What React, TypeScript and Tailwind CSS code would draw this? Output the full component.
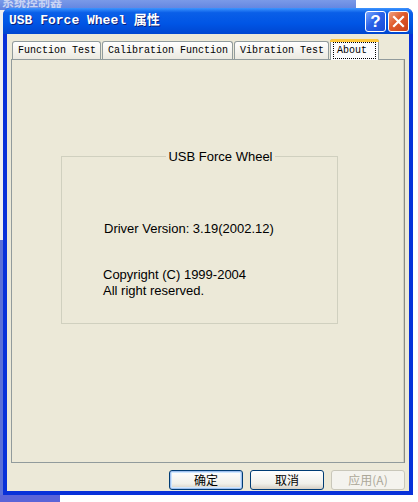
const tabs = ['Function Test', 'Calibration Function', 'Vibration Test'];

function TitleButton({ kind }: { kind: 'help' | 'close' }) {
  const close = kind === 'close';
  return (
    <div
      className={`flex h-[21px] w-[21px] items-center justify-center rounded-[3px] border border-white ${
        close ? 'bg-[linear-gradient(135deg,#f0a080,#e05a2a_45%,#c8401a)]' : 'bg-[linear-gradient(135deg,#7aa6ff,#2a62e8_45%,#1a4ad8)]'
      }`}
    >
      {close ? (
        <svg width="13" height="13" viewBox="0 0 13 13">
          <path d="M2 2 L11 11 M11 2 L2 11" stroke="white" strokeWidth="2.2" strokeLinecap="square" />
        </svg>
      ) : (
        <span className="font-['Liberation_Sans',sans-serif] text-[17px] font-bold leading-none text-white">?</span>
      )}
    </div>
  );
}

function XpButton({ label, primary, disabled }: { label: string; primary?: boolean; disabled?: boolean }) {
  return (
    <div
      className={`flex h-[20px] w-[74px] items-center justify-center rounded-[3px] border text-[12px] ${
        disabled
          ? 'border-[#c9c7ba] bg-[#f4f3ee] text-[#aca899]'
          : 'border-[#003c74] bg-[linear-gradient(#ffffff,#f0f0ea_70%,#d6d0c5)] text-black'
      } ${primary ? 'shadow-[inset_0_0_0_1px_#9fbfee,inset_0_0_0_2px_#cee7ff]' : ''}`}
    >
      {label}
    </div>
  );
}

export default function App() {
  return (
    <div className="relative h-[502px] w-[418px] overflow-hidden bg-white font-['Liberation_Sans','Noto_Sans_CJK_SC',sans-serif]">
      {/* desktop behind */}
      <div className="flex h-[10px] w-[356px] items-start overflow-hidden bg-[linear-gradient(#7a9ae8,#5f82e0)] pl-[2px]">
        <span className="-mt-[4px] text-[12px] font-bold leading-[14px] text-[#c8d4f4]">系统控制器</span>
      </div>
      <div className="h-[230px] w-[4px] bg-[#f0f0f0]" />
      <div className="h-[262px] w-[4px] bg-[#5a6fd8]" />
      <div className="absolute bottom-0 left-0 h-[7px] w-[60px] bg-[#5a64d8]" />

      {/* window */}
      <div className="absolute left-[3px] top-[8px] flex h-[487px] w-[410px] flex-col overflow-hidden rounded-t-[7px] bg-[#0831d9]">
        <div className="flex h-[26px] shrink-0 items-center bg-[linear-gradient(#3d95ff,#0a5fe8_18%,#0055e5_60%,#0046d0)] pl-[6px] pr-[4px]">
          <span className="flex-1 font-['Liberation_Mono','Noto_Sans_CJK_SC',monospace] text-[13px] font-bold text-white [text-shadow:1px_1px_#0a1e7a]">
            USB Force Wheel 属性
          </span>
          <div className="flex gap-[2px]">
            <TitleButton kind="help" />
            <TitleButton kind="close" />
          </div>
        </div>

        <div className="mx-[4px] mb-[4px] flex flex-1 flex-col bg-[#ece9d8] px-[4px] pt-[6px]">
          {/* tab strip */}
          <div className="flex h-[19px] items-end pl-[1px] font-['Liberation_Mono','Noto_Sans_CJK_SC',monospace] text-[10px]">
            {tabs.map((t) => (
              <div
                key={t}
                className="mr-[1px] flex h-[18px] items-center rounded-t-[3px] border border-b-0 border-[#919b9c] bg-[linear-gradient(#ffffff,#f3f2ec_60%,#ebe9e0)] pl-[5px] pr-[4px] text-black"
              >
                {t}
              </div>
            ))}
            <div className="relative z-10 -mb-px flex h-[21px] w-[49px] flex-col rounded-t-[3px] border border-b-0 border-[#919b9c] bg-[#fcfcfe]">
              <div className="-mx-px -mt-px h-[3px] rounded-t-[3px] bg-[#ffc83c]" />
              <div className="mx-[2px] mb-[1px] flex flex-1 items-center border border-dotted border-black px-[3px] leading-none text-black">
                About
              </div>
            </div>
          </div>

          {/* tab panel */}
          <div className="flex h-[404px] flex-col items-start border border-[#919b9c] border-r-[#8c8b80] bg-[#ece9d8] pl-[49px] pt-[89px] text-[13px] text-black shadow-[inset_-1px_0_#d0cfc6]">
            <fieldset className="h-[175px] w-[277px] border border-[#d0d0bf] pl-[42px] pt-[57px]">
              <legend className="mx-auto px-[2px] leading-[15px]">USB Force Wheel</legend>
              <div className="leading-[15px]">Driver Version: 3.19(2002.12)</div>
              <div className="mt-[31px] -ml-px leading-[16px]">
                Copyright (C) 1999-2004
                <br />
                All right reserved.
              </div>
            </fieldset>
          </div>

          {/* buttons */}
          <div className="flex justify-end gap-[7px] pt-[7px] font-['Noto_Sans_CJK_SC',sans-serif]">
            <XpButton label="确定" primary />
            <XpButton label="取消" />
            <XpButton label="应用(A)" disabled />
          </div>
        </div>
      </div>
    </div>
  );
}
